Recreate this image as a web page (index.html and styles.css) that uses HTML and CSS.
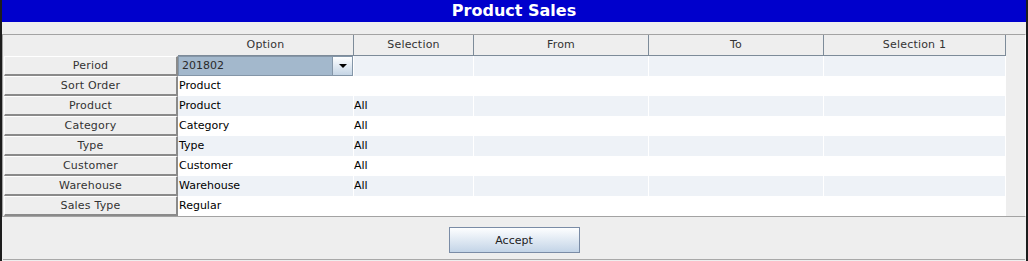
FILE: index.html
```html
<!DOCTYPE html>
<html>
<head>
    <title>Product Sales</title>
    <meta charset="utf-8">
    <link rel="stylesheet" href="styles.css">
</head>
<body>
    <div class="window">
        <div class="title">Product Sales</div>
        <div class="spacer"></div>

        <div class="pane">
            <div class="row head">
                <div class="hcell corner"></div>
                <div class="hcell">Option</div>
                <div class="hcell">Selection</div>
                <div class="hcell">From</div>
                <div class="hcell">To</div>
                <div class="hcell">Selection 1</div>
            </div>

            <div class="row alt">
                <div class="rh"><div class="rh-btn">Period</div></div>
                <div class="cell combo-cell">
                    <div class="combo">
                        <div class="combo-value">201802</div>
                        <div class="combo-arrow"><span class="tri"></span></div>
                    </div>
                </div>
                <div class="cell"></div><div class="cell"></div><div class="cell"></div><div class="cell"></div>
            </div>
            <div class="row">
                <div class="rh"><div class="rh-btn">Sort Order</div></div>
                <div class="cell opt">Product</div>
                <div class="cell"></div><div class="cell"></div><div class="cell"></div><div class="cell"></div>
            </div>
            <div class="row alt">
                <div class="rh"><div class="rh-btn">Product</div></div>
                <div class="cell opt">Product</div>
                <div class="cell">All</div><div class="cell"></div><div class="cell"></div><div class="cell"></div>
            </div>
            <div class="row">
                <div class="rh"><div class="rh-btn">Category</div></div>
                <div class="cell opt">Category</div>
                <div class="cell">All</div><div class="cell"></div><div class="cell"></div><div class="cell"></div>
            </div>
            <div class="row alt">
                <div class="rh"><div class="rh-btn">Type</div></div>
                <div class="cell opt">Type</div>
                <div class="cell">All</div><div class="cell"></div><div class="cell"></div><div class="cell"></div>
            </div>
            <div class="row">
                <div class="rh"><div class="rh-btn">Customer</div></div>
                <div class="cell opt">Customer</div>
                <div class="cell">All</div><div class="cell"></div><div class="cell"></div><div class="cell"></div>
            </div>
            <div class="row alt">
                <div class="rh"><div class="rh-btn">Warehouse</div></div>
                <div class="cell opt">Warehouse</div>
                <div class="cell">All</div><div class="cell"></div><div class="cell"></div><div class="cell"></div>
            </div>
            <div class="row">
                <div class="rh"><div class="rh-btn">Sales Type</div></div>
                <div class="cell opt">Regular</div>
                <div class="cell"></div><div class="cell"></div><div class="cell"></div><div class="cell"></div>
            </div>
        </div>

        <div class="footer">
            <button class="accept-btn">Accept</button>
        </div>
        <div class="bottom-line"></div>
    </div>
</body>
</html>
```

FILE: styles.css
```css
body { margin: 0; background: #1c1c1c; font-family: "DejaVu Sans", sans-serif; font-size: 11px; }
.window { width: 1024px; height: 261px; margin: 0 2px; background: #eeeeee; display: flex; flex-direction: column; }
.title { height: 22px; line-height: 22px; background: #0000cc; color: #fff; font-size: 16px; font-weight: bold; text-align: center; }
.spacer { height: 12px; }

.pane { border-top: 1px solid #a3a3a3; border-left: 1px solid #a3a3a3; border-right: 1px solid #fff; border-bottom: 1px solid #a3a3a3; }
.row { display: grid; grid-template-columns: 175px 176px 120px 175px 175px 182px; height: 20px; width: 1003px; }
.row.head { height: 21px; }
.hcell { box-sizing: border-box; border-right: 1px solid #7d8b99; border-bottom: 1px solid #7d8b99; line-height: 20px; text-align: center; color: #333; letter-spacing: 0.2px; }
.hcell.corner { border-right: none; border-bottom: 1px solid #eeeeee; }

.cell { box-sizing: border-box; border-right: 1px solid #fff; background: #fff; line-height: 20px; color: #000; white-space: nowrap; overflow: hidden; }
.row.alt .cell { background: #eef2f7; }
.cell.opt { padding-left: 1px; }

.rh { padding-left: 1px; }
.rh-btn { box-sizing: border-box; height: 20px; background: #eeeeee; border-top: 1px solid #fff; border-left: 1px solid #fff; border-right: 2px solid #8a8a8a; border-bottom: 2px solid #8a8a8a; text-align: center; line-height: 17px; color: #333; letter-spacing: 0.2px; }

.combo-cell { padding: 0; }
.combo { display: flex; box-sizing: border-box; height: 20px; border: 1px solid #8496a8; background: #a3b8cc; }
.combo-value { flex: 1; padding-left: 3px; line-height: 18px; color: #2a2a2a; }
.combo-arrow { width: 19px; background: linear-gradient(#fdfeff, #c5d5e5); border-left: 1px solid #8496a8; display: flex; align-items: center; justify-content: center; }
.tri { width: 0; height: 0; border-left: 4px solid transparent; border-right: 4px solid transparent; border-top: 4px solid #000; }

.footer { height: 42px; display: flex; justify-content: center; align-items: flex-start; }
.accept-btn { margin-top: 10px; width: 131px; height: 26px; border: 1px solid #7a8ca6; background: linear-gradient(#fdfeff, #c3d4e7); font-family: "DejaVu Sans", sans-serif; font-size: 11px; color: #222; padding: 0; }
.bottom-line { height: 1px; margin: 0 1px; background: #a8a8a8; }
```
